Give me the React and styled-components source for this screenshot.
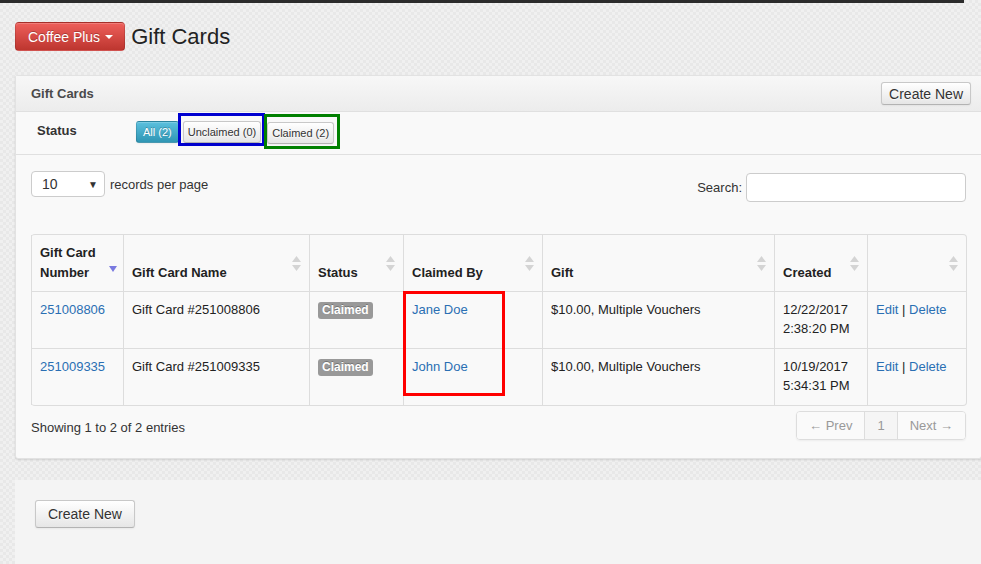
import React from 'react'
import styled, { createGlobalStyle } from 'styled-components'

const Global = createGlobalStyle`
  html, body {
    margin: 0;
    padding: 0;
  }
  body {
    font-family: "Liberation Sans", Arial, sans-serif;
    font-size: 13px;
    color: #333;
    background-color: #ececec;
    background-image: repeating-conic-gradient(#e8e8e8 0% 25%, #f0f0f0 0% 50%);
    background-size: 6px 6px;
    overflow: hidden;
  }
`

const TopBar = styled.div`
  height: 3px;
  width: 964px;
  background: #2b2b2b;
`

const Header = styled.div`
  display: flex;
  align-items: center;
  gap: 6px;
  padding: 19px 15px 0;
  height: 29px;
`

const BrandButton = styled.button`
  display: inline-flex;
  align-items: center;
  gap: 5px;
  height: 29px;
  padding: 0 11px 0 12px;
  font-family: inherit;
  font-size: 14px;
  color: #fff;
  text-shadow: 0 -1px 0 rgba(0, 0, 0, 0.25);
  background: linear-gradient(#ee5f5b, #bd362f);
  border: 1px solid rgba(0, 0, 0, 0.12);
  border-radius: 4px;
  box-shadow: inset 0 1px 0 rgba(255, 255, 255, 0.2);
`

const Caret = styled.span`
  width: 0;
  height: 0;
  border-left: 4px solid transparent;
  border-right: 4px solid transparent;
  border-top: 4px solid #fff;
  margin-top: 1px;
`

const Title = styled.h1`
  margin: 0;
  font-size: 22px;
  font-weight: normal;
  color: #222;
`

const Panel = styled.div`
  margin: 24px 0 0 15px;
  width: calc(100% - 16px);
  background: #f9f9f9;
  border: 1px solid #e2e2e2;
  border-radius: 3px;
  box-shadow: 0 1px 2px rgba(0, 0, 0, 0.12);
`

const PanelHeading = styled.div`
  display: flex;
  align-items: center;
  justify-content: space-between;
  height: 35px;
  padding: 0 10px 0 15px;
  background: linear-gradient(#f7f7f7, #ececec);
  border-bottom: 1px solid #e0e0e0;
  font-weight: bold;
  color: #4a4a4a;
  font-size: 13px;
`

const Button = styled.button`
  font-family: inherit;
  font-size: ${({ big }) => (big ? '14px' : '11px')};
  height: ${({ big }) => (big ? '28px' : '22px')};
  padding: ${({ big, info }) => (big ? '0 12px' : info ? '0 6px' : '0 4px')};
  color: ${({ info }) => (info ? '#fff' : '#333')};
  text-shadow: ${({ info }) => (info ? '0 -1px 0 rgba(0,0,0,0.25)' : '0 1px 1px rgba(255,255,255,0.75)')};
  background: ${({ info }) => (info ? 'linear-gradient(#5bc0de, #2f96b4)' : 'linear-gradient(#ffffff, #e6e6e6)')};
  border: 1px solid ${({ info }) => (info ? 'rgba(0,0,0,0.12)' : '#c8c8c8')};
  border-bottom-color: ${({ info }) => (info ? 'rgba(0,0,0,0.2)' : '#b3b3b3')};
  border-radius: 3px;
  box-shadow: inset 0 1px 0 rgba(255, 255, 255, 0.2), 0 1px 2px rgba(0, 0, 0, 0.05);
`

const HeadButton = styled(Button)`
  height: 23px;
  padding: 0 7px;
`

const StatusRow = styled.div`
  display: flex;
  align-items: flex-start;
  height: 42px;
  padding: 0 0 0 21px;
  border-bottom: 1px solid #e0e0e0;
`

const StatusLabel = styled.div`
  width: 99px;
  padding-top: 11px;
  font-weight: bold;
  font-size: 13px;
  color: #333;
`

const Filters = styled.div`
  display: flex;
  align-items: flex-start;
  padding-top: 1px;
`

const FilterSlot = styled.div`
  padding-top: 8px;
  margin-right: -1px;
`

const Marked = styled.div`
  border: 3px solid ${({ color }) => color};
  padding: ${({ pad }) => pad};
  margin-top: ${({ top }) => top};
  margin-left: ${({ shift }) => shift || '0'};
`

const PanelBody = styled.div`
  padding: 16px 15px 18px 15px;
`

const Controls = styled.div`
  display: flex;
  justify-content: space-between;
  align-items: flex-start;
  height: 63px;
`

const Length = styled.label`
  display: flex;
  align-items: center;
  gap: 5px;
  font-size: 13px;
`

const FakeSelect = styled.div`
  display: flex;
  align-items: center;
  justify-content: space-between;
  width: 74px;
  height: 26px;
  box-sizing: border-box;
  padding: 0 6px 0 10px;
  background: #fff;
  border: 1px solid #ccc;
  border-radius: 4px;
  font-size: 14px;
  color: #333;

  span {
    font-size: 10px;
  }
`

const Search = styled.label`
  display: flex;
  align-items: center;
  gap: 4px;
  margin-top: 2px;
  font-size: 13px;
`

const SearchInput = styled.input`
  width: 220px;
  height: 29px;
  box-sizing: border-box;
  border: 1px solid #ccc;
  border-radius: 4px;
  background: #fff;
`

const TableWrap = styled.div`
  position: relative;
`

const Table = styled.table`
  width: 100%;
  table-layout: fixed;
  border-collapse: separate;
  border-spacing: 0;
  border: 1px solid #ddd;
  border-left: 0;
  border-radius: 4px;
  font-size: 13px;
`

const Th = styled.th`
  position: relative;
  text-align: left;
  vertical-align: bottom;
  padding: 8px 8px 8px;
  line-height: 20px;
  font-weight: bold;
  color: #222;
  border-left: 1px solid #ddd;
`

const Td = styled.td`
  vertical-align: top;
  padding: 8px 8px 10px;
  line-height: 19px;
  color: #222;
  border-left: 1px solid #ddd;
  border-top: 1px solid #ddd;
`

const SortIcon = styled.svg`
  position: absolute;
  right: ${({ sorted }) => (sorted ? '6px' : '8px')};
  top: ${({ sorted }) => (sorted ? '31px' : '21px')};
`

const Link = styled.a`
  color: #2a6fb3;
  text-decoration: none;
`

const Label = styled.span`
  display: inline-block;
  padding: 1px 4px 2px;
  font-size: 12px;
  font-weight: bold;
  line-height: 14px;
  color: #fff;
  background: #999;
  border-radius: 3px;
  text-shadow: 0 -1px 0 rgba(0, 0, 0, 0.25);
`

const Highlight = styled.div`
  position: absolute;
  left: 372px;
  top: 57px;
  width: 102px;
  height: 105px;
  box-sizing: border-box;
  border: 3px solid #f00;
`

const Footer = styled.div`
  display: flex;
  justify-content: space-between;
  align-items: flex-start;
  padding-top: 5px;
`

const Info = styled.div`
  padding-top: 9px;
  font-size: 13px;
`

const Pager = styled.div`
  display: flex;
  border: 1px solid #ddd;
  border-radius: 4px;
  box-shadow: 0 1px 2px rgba(0, 0, 0, 0.05);
  overflow: hidden;
`

const PageItem = styled.span`
  display: flex;
  align-items: center;
  height: 27px;
  padding: 0 12px;
  font-size: 13px;
  color: #999;
  background: ${({ active }) => (active ? '#f5f5f5' : '#fafafa')};
  border-left: ${({ first }) => (first ? '0' : '1px solid #ddd')};
`

const BottomPanel = styled.div`
  margin: 21px 0 0 15px;
  height: 120px;
  padding: 20px;
  background: #f4f4f4;
`

function Sort({ sorted }) {
  if (sorted) {
    return (
      <SortIcon sorted width="8" height="7" viewBox="0 0 8 7">
        <polygon points="0,0 8,0 4,6" fill="#7a7ae0" />
      </SortIcon>
    )
  }
  return (
    <SortIcon width="9" height="15" viewBox="0 0 9 15">
      <polygon points="4.5,0 9,6 0,6" fill="#d4d4d4" />
      <polygon points="0,9 9,9 4.5,15" fill="#d4d4d4" />
    </SortIcon>
  )
}

const rows = [
  { num: '251008806', date: '12/22/2017', time: '2:38:20 PM', by: 'Jane Doe' },
  { num: '251009335', date: '10/19/2017', time: '5:34:31 PM', by: 'John Doe' },
]

export default function App() {
  return (
    <>
      <Global />
      <TopBar />
      <Header>
        <BrandButton>
          Coffee Plus <Caret />
        </BrandButton>
        <Title>Gift Cards</Title>
      </Header>

      <Panel>
        <PanelHeading>
          Gift Cards
          <HeadButton big>Create New</HeadButton>
        </PanelHeading>
        <StatusRow>
          <StatusLabel>Status</StatusLabel>
          <Filters>
            <FilterSlot>
              <Button info>All (2)</Button>
            </FilterSlot>
            <Marked color="#0000d0" pad="5px 1px 0 2px" top="0">
              <Button>Unclaimed (0)</Button>
            </Marked>
            <Marked color="#008000" pad="5px 3px 2px 0" top="1px" shift="-1px">
              <Button>Claimed (2)</Button>
            </Marked>
          </Filters>
        </StatusRow>

        <PanelBody>
          <Controls>
            <Length>
              <FakeSelect>
                10 <span>▼</span>
              </FakeSelect>
              records per page
            </Length>
            <Search>
              Search:
              <SearchInput />
            </Search>
          </Controls>

          <TableWrap>
            <Table>
              <colgroup>
                <col style={{ width: 92 }} />
                <col style={{ width: 186 }} />
                <col style={{ width: 94 }} />
                <col style={{ width: 139 }} />
                <col style={{ width: 232 }} />
                <col style={{ width: 93 }} />
                <col style={{ width: 99 }} />
              </colgroup>
              <thead>
                <tr>
                  <Th>Gift Card Number<Sort sorted /></Th>
                  <Th>Gift Card Name<Sort /></Th>
                  <Th>Status<Sort /></Th>
                  <Th>Claimed By<Sort /></Th>
                  <Th>Gift<Sort /></Th>
                  <Th>Created<Sort /></Th>
                  <Th><Sort /></Th>
                </tr>
              </thead>
              <tbody>
                {rows.map((r) => (
                  <tr key={r.num}>
                    <Td><Link href="#">{r.num}</Link></Td>
                    <Td>Gift Card #{r.num}</Td>
                    <Td><Label>Claimed</Label></Td>
                    <Td><Link href="#">{r.by}</Link></Td>
                    <Td>$10.00, Multiple Vouchers</Td>
                    <Td>{r.date}<br />{r.time}</Td>
                    <Td><Link href="#">Edit</Link> | <Link href="#">Delete</Link></Td>
                  </tr>
                ))}
              </tbody>
            </Table>
            <Highlight />
          </TableWrap>

          <Footer>
            <Info>Showing 1 to 2 of 2 entries</Info>
            <Pager>
              <PageItem first>← Prev</PageItem>
              <PageItem active>1</PageItem>
              <PageItem>Next →</PageItem>
            </Pager>
          </Footer>
        </PanelBody>
      </Panel>

      <BottomPanel>
        <Button big>Create New</Button>
      </BottomPanel>
    </>
  )
}
